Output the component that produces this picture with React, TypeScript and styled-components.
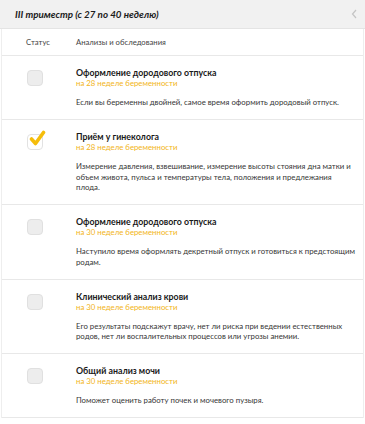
import React from 'react'
import styled, { createGlobalStyle } from 'styled-components'

const GlobalStyle = createGlobalStyle`
  body {
    margin: 0;
    background: #ffffff;
    font-family: Lato, "Open Sans", Arial, sans-serif;
    color: #333333;
  }
`

const Panel = styled.div`
  width: 365px;
`

const Header = styled.div`
  height: 29px;
  background-color: #f1f1f1;
  border-bottom: 1px solid #e4e4e4;
  display: flex;
  align-items: center;
  justify-content: space-between;
  padding: 0 8px 0 15px;
  box-sizing: border-box;
`

const HeaderTitle = styled.div`
  font-size: 9.8px;
  font-weight: 700;
  font-style: italic;
  color: #1c1c1c;
`

const Chevron = styled.svg`
  width: 6px;
  height: 10px;
`

const Table = styled.div`
  margin: 0 1px 0 1px;
  border-left: 1px solid #eeeeee;
  border-right: 1px solid #eeeeee;
`

const ColumnsRow = styled.div`
  display: grid;
  grid-template-columns: 74px 1fr;
  height: 26px;
  align-items: center;
  border-bottom: 1px solid #e8e8e8;
  font-size: 7.7px;
  color: #444444;
`

const ColumnLabel = styled.div<{ pad?: number }>`
  padding-left: ${props => props.pad || 0}px;
`

const Row = styled.div`
  display: grid;
  grid-template-columns: 74px 1fr;
  border-bottom: 1px solid #e8e8e8;
  padding: 11px 0 11.5px;
`

const StatusCell = styled.div`
  padding: 3px 0 0 25px;
`

const Box = styled.div<{ checked: boolean }>`
  width: 16px;
  height: 16px;
  box-sizing: border-box;
  border-radius: 4px;
  border: 1px solid ${props => props.checked ? '#e2e2e2' : '#e0e0e0'};
  background-color: ${props => props.checked ? '#ffffff' : '#ededed'};
  position: relative;
`

const Tick = styled.svg`
  position: absolute;
  left: 1px;
  top: -5px;
  width: 17px;
  height: 17px;
`

const Content = styled.div`
  padding-right: 6px;
`

const Title = styled.div`
  font-size: 8.8px;
  font-weight: 700;
  line-height: 11px;
  color: #1a1a1a;
`

const Week = styled.div`
  font-size: 7.8px;
  line-height: 10px;
  color: #f2b418;
`

const Description = styled.div`
  margin-top: 9px;
  font-size: 7.8px;
  line-height: 10.5px;
  color: #363636;
`

type Item = {
  title: string,
  week: string,
  text: string,
  done?: boolean
}

const items: Array<Item> = [
  {
    title: 'Оформление дородового отпуска',
    week: 'на 28 неделе беременности',
    text: 'Если вы беременны двойней, самое время оформить дородовый отпуск.'
  },
  {
    title: 'Приём у гинеколога',
    week: 'на 28 неделе беременности',
    text: 'Измерение давления, взвешивание, измерение высоты стояния дна матки и объем живота, пульса и температуры тела, положения и предлежания плода.',
    done: true
  },
  {
    title: 'Оформление дородового отпуска',
    week: 'на 30 неделе беременности',
    text: 'Наступило время оформлять декретный отпуск и готовиться к предстоящим родам.'
  },
  {
    title: 'Клинический анализ крови',
    week: 'на 30 неделе беременности',
    text: 'Его результаты подскажут врачу, нет ли риска при ведении естественных родов, нет ли воспалительных процессов или угрозы анемии.'
  },
  {
    title: 'Общий анализ мочи',
    week: 'на 30 неделе беременности',
    text: 'Поможет оценить работу почек и мочевого пузыря.'
  }
]

const App = () => {
  return <Panel>
    <GlobalStyle />
    <Header>
      <HeaderTitle>III триместр (с 27 по 40 неделю)</HeaderTitle>
      <Chevron viewBox="0 0 6 10">
        <path d="M5 1 L1.5 5 L5 9" fill="none" stroke="#c4c4c4" strokeWidth="1.2" />
      </Chevron>
    </Header>
    <Table>
      <ColumnsRow>
        <ColumnLabel pad={24}>Статус</ColumnLabel>
        <ColumnLabel>Анализы и обследования</ColumnLabel>
      </ColumnsRow>
      {items.map((item, i) => (
        <Row key={i}>
          <StatusCell>
            <Box checked={Boolean(item.done)}>
              {item.done && <Tick viewBox="0 0 17 17">
                <path d="M2.5 9 L6.5 13.5 L14.5 2.5" fill="none" stroke="#f5bd0a" strokeWidth="3.6" strokeLinecap="round" strokeLinejoin="round" />
              </Tick>}
            </Box>
          </StatusCell>
          <Content>
            <Title>{item.title}</Title>
            <Week>{item.week}</Week>
            <Description>{item.text}</Description>
          </Content>
        </Row>
      ))}
    </Table>
  </Panel>
}

export default App
